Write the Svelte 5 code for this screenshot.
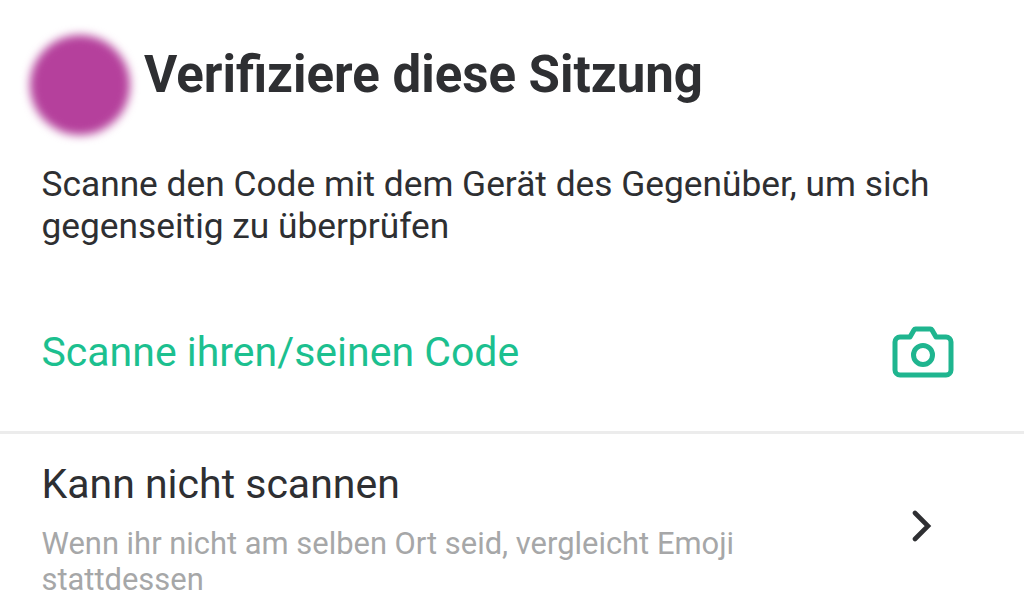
<script>
	const title = 'Verifiziere diese Sitzung';
</script>

<div class="screen">
	<header class="head">
		<div class="avatar"></div>
		<h1>{title}</h1>
	</header>

	<p class="intro">Scanne den Code mit dem Gerät des Gegenüber, um sich gegenseitig zu überprüfen</p>

	<div class="scan">
		<span>Scanne ihren/seinen Code</span>
		<svg width="62" height="54" viewBox="0 0 62 54" fill="none" stroke="#1fb58f" stroke-width="5" stroke-linejoin="round" stroke-linecap="round">
			<path d="M8 12h10l4-7a2 2 0 0 1 2-1h14a2 2 0 0 1 2 1l4 7h10a5 5 0 0 1 5 5v28a5 5 0 0 1-5 5H8a5 5 0 0 1-5-5V17a5 5 0 0 1 5-5z" />
			<circle cx="31" cy="30" r="9.5" />
		</svg>
	</div>

	<div class="alt">
		<div class="alt-text">
			<div class="alt-title">Kann nicht scannen</div>
			<div class="alt-sub">Wenn ihr nicht am selben Ort seid, vergleicht Emoji stattdessen</div>
		</div>
		<svg class="chevron" width="20" height="32" viewBox="0 0 20 32" fill="none" stroke="#2e2f32" stroke-width="4.6" stroke-linecap="round">
			<path d="M3 3l13 13L3 29" />
		</svg>
	</div>
</div>

<style>
	:global(body) {
		background: #fff;
		font-family: Roboto, 'Noto Sans', sans-serif;
		overflow: hidden;
	}

	.screen {
		height: 612px;
		overflow: hidden;
		background: #fff;
		color: #2e2f32;
	}

	.head {
		display: flex;
		align-items: center;
		gap: 14px;
		padding: 35px 30px 0;
	}

	.avatar {
		width: 100px;
		height: 100px;
		border-radius: 50%;
		background: #b5409c;
		filter: blur(5px);
		flex-shrink: 0;
	}

	h1 {
		margin: 0 0 20px;
		font-size: 51px;
		font-weight: 700;
		line-height: 56px;
		white-space: nowrap;
	}

	.intro {
		margin: 28px 0 0;
		padding: 0 80px 0 41.5px;
		font-size: 35.3px;
		line-height: 42px;
	}

	.scan {
		display: flex;
		align-items: center;
		justify-content: space-between;
		height: 158px;
		margin-top: 26px;
		padding: 0 70px 0 41.5px;
		border-bottom: 3px solid #ececec;
		color: #1cc08f;
		font-size: 41px;
	}

	.alt {
		display: flex;
		align-items: center;
		justify-content: space-between;
		padding: 25px 92px 0 41.5px;
	}

	.alt-text {
		width: 720px;
	}

	.alt-title {
		font-size: 41px;
		line-height: 50px;
	}

	.alt-sub {
		margin-top: 17px;
		color: #a6a7a8;
		font-size: 30.9px;
		line-height: 36px;
	}

	.chevron {
		margin-bottom: 5px;
	}
</style>
